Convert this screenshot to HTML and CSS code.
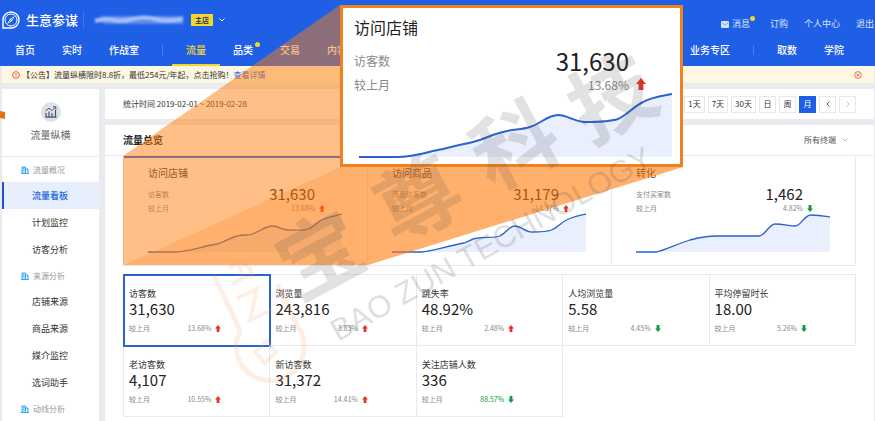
FILE: index.html
```html
<!DOCTYPE html>
<html lang="zh-CN">
<head>
<meta charset="utf-8">
<title>生意参谋 - 流量看板</title>
<link rel="stylesheet" href="styles.css">
</head>
<body>
<svg class="defs" width="0" height="0" aria-hidden="true">
  <symbol id="up" viewBox="0 0 10 12"><path d="M5 0L10 6H7.4V12H2.6V6H0Z" fill="#e83228"/></symbol>
  <symbol id="down" viewBox="0 0 10 12"><path d="M5 12L10 6H7.4V0H2.6V6H0Z" fill="#0a9c48"/></symbol>
  <symbol id="building" viewBox="0 0 8 8"><path d="M0 7.5H8M1 7V1H4.5V7M5 3H7V7M2.2 2.8H3.3M2.2 4.6H3.3" fill="#b9e2fb" stroke="#3aa5ee" stroke-width="1"/></symbol>
</svg>

<header class="header">
  <div class="topbar">
    <svg class="logo" viewBox="0 0 18 18"><path d="M1 17V9A8 8 0 1 1 9 17Z" fill="#1f5fe6" stroke="#fff" stroke-width="1.4"/><circle cx="9" cy="9" r="6" fill="none" stroke="#fff" stroke-width="1"/><path d="M12.8 5L10 10L5 13L8 8Z" fill="#fff"/><path d="M7 11L11 7" stroke="#1f5fe6" stroke-width=".8"/></svg>
    <strong class="brand">生意参谋</strong>
    <svg class="shop-name" viewBox="0 0 92 14"><path d="M3 7L9 3H90V11H12Z" fill="#5f8def"/><path d="M2 8Q12 5 20 7T40 6T62 6T90 6" fill="none" stroke="#a9c2f7" stroke-width="4"/></svg>
    <span class="shop-tag">主店</span>
    <svg class="caret" viewBox="0 0 6 4"><path d="M.5 .5L3 3L5.5 .5" fill="none" stroke="#fff"/></svg>
    <nav class="account">
      <a href="#" class="mail"><svg viewBox="0 0 8 7"><rect width="8" height="7" rx="1" fill="#d5e1fb"/><path d="M1 2L4 4L7 2" fill="none" stroke="#6b94ee" stroke-width=".7"/></svg>消息<i class="dot"></i></a>
      <a href="#">订购</a><a href="#">个人中心</a><a href="#">退出</a>
    </nav>
  </div>
  <nav class="mainnav">
    <a href="#">首页</a><a href="#">实时</a><a href="#">作战室</a>
    <i class="bar"></i>
    <a href="#" class="active">流量</a><a href="#">品类<i class="dot"></i></a><a href="#">交易</a><a href="#">内容</a>
    <a href="#" class="push">业务专区</a>
    <i class="bar"></i>
    <a href="#">取数</a><a href="#">学院</a>
  </nav>
</header>

<div class="notice">
  <svg class="ring" viewBox="0 0 8 8"><circle cx="4" cy="4" r="3.4" fill="none" stroke="#e8503c" stroke-width=".9"/><path d="M4 1.8V4.6M4 5.3V6.2" stroke="#e8503c"/></svg>
  <span>【公告】流量纵横限时8.8折，最低254元/年起，点击抢购！</span>
  <a href="#">查看详情</a>
  <button class="close" aria-label="关闭"><svg class="ring" viewBox="0 0 8 8"><circle cx="4" cy="4" r="3.4" fill="none" stroke="#e8503c" stroke-width=".8"/><path d="M2.5 2.5L5.5 5.5M5.5 2.5L2.5 5.5" stroke="#e8503c" stroke-width=".8"/></svg></button>
</div>

<div class="layout">
  <aside class="sidebar">
    <div class="module">
      <svg viewBox="0 0 20 20"><circle cx="10" cy="10" r="10" fill="#dfe1e8"/><path d="M5 15V11M8 15V9.5M11 15V11M14.5 15V8M4.5 15.2H15.5" stroke="#46506a" stroke-width="1.2" fill="none"/><path d="M4.5 9L8 6.2L11 8.5L14.5 5M12 4.8H14.8V7.5" stroke="#46506a" fill="none"/></svg>
      <span>流量纵横</span>
    </div>
    <h3><svg><use href="#building"/></svg>流量概况</h3>
    <a href="#" class="active">流量看板</a>
    <a href="#">计划监控</a>
    <a href="#">访客分析</a>
    <h3><svg><use href="#building"/></svg>来源分析</h3>
    <a href="#">店铺来源</a>
    <a href="#">商品来源</a>
    <a href="#">媒介监控</a>
    <a href="#">选词助手</a>
    <h3><svg><use href="#building"/></svg>动线分析</h3>
  </aside>

  <main class="main">
    <div class="filter">
      <span class="period">统计时间 2019-02-01 ~ 2019-02-28</span>
      <button>1天</button><button>7天</button><button>30天</button><button>日</button><button>周</button><button class="on">月</button>
      <button aria-label="上一月"><svg viewBox="0 0 4 6"><path d="M3.5 .5L1 3L3.5 5.5" fill="none" stroke="#444" stroke-width=".9"/></svg></button>
      <button aria-label="下一月"><svg viewBox="0 0 4 6"><path d="M.5 .5L3 3L.5 5.5" fill="none" stroke="#bbb" stroke-width=".9"/></svg></button>
    </div>

    <section class="panel">
      <div class="panel-head">
        <h2>流量总览</h2>
        <label class="terminal"><select aria-label="终端"><option>所有终端</option></select><svg viewBox="0 0 6 4"><path d="M.5 .5L3 3L5.5 .5" fill="none" stroke="#999" stroke-width=".7"/></svg></label>
      </div>

      <div class="cards">
        <article class="card on">
          <h4>访问店铺</h4>
          <p class="value"><span>访客数</span><b>31,630</b></p>
          <p class="cmp"><span>较上月</span><em>13.68%</em><svg><use href="#up"/></svg></p>
          <svg class="chart" viewBox="0 2 192 39" preserveAspectRatio="none"><path class="area" d="M0 40H25C40 40 50 35 68 32C76 30 82 25 88 24C95 22 98 24 103 22C112 18 117 14 122 14C129 14 132 18 138 18C147 18 152 19 158 17C165 14 167 9 173 7C180 4 185 4 191 2V40Z"/><path class="line" d="M0 40H25C40 40 50 35 68 32C76 30 82 25 88 24C95 22 98 24 103 22C112 18 117 14 122 14C129 14 132 18 138 18C147 18 152 19 158 17C165 14 167 9 173 7C180 4 185 4 191 2"/></svg>
        </article>
        <article class="card">
          <h4>访问商品</h4>
          <p class="value"><span>商品访客数</span><b>31,179</b></p>
          <p class="cmp"><span>较上月</span><em>14.37%</em><svg><use href="#up"/></svg></p>
          <svg class="chart" viewBox="0 2 192 39" preserveAspectRatio="none"><path class="area" d="M0 40H29C38 40 54 34 71 31C76 29 80 26 85 26C94 25 102 26 106 24C113 21 115 14 121 14C127 14 131 20 138 20C146 20 152 20 157 18C164 15 168 9 174 7C180 4 186 3 191 2V40Z"/><path class="line" d="M0 40H29C38 40 54 34 71 31C76 29 80 26 85 26C94 25 102 26 106 24C113 21 115 14 121 14C127 14 131 20 138 20C146 20 152 20 157 18C164 15 168 9 174 7C180 4 186 3 191 2"/></svg>
        </article>
        <article class="card">
          <h4>转化</h4>
          <p class="value"><span>支付买家数</span><b>1,462</b></p>
          <p class="cmp"><span>较上月</span><em>4.82%</em><svg><use href="#down"/></svg></p>
          <svg class="chart" viewBox="0 2 192 39" preserveAspectRatio="none"><path class="area" d="M0 40H20C26 39 43 31 53 28C64 25 70 24 80 24H121C127 24 131 12 137 12C145 12 151 14 157 14C162 14 166 3 172 3C180 3 185 4 191 5V40Z"/><path class="line" d="M0 40H20C26 39 43 31 53 28C64 25 70 24 80 24H121C127 24 131 12 137 12C145 12 151 14 157 14C162 14 166 3 172 3C180 3 185 4 191 5"/></svg>
        </article>
      </div>

      <div class="metrics">
        <article class="metric on"><h5>访客数</h5><b>31,630</b><p class="cmp"><span>较上月</span><em>13.68%</em><svg><use href="#up"/></svg></p></article>
        <article class="metric"><h5>浏览量</h5><b>243,816</b><p class="cmp"><span>较上月</span><em>3.83%</em><svg><use href="#up"/></svg></p></article>
        <article class="metric"><h5>跳失率</h5><b>48.92%</b><p class="cmp"><span>较上月</span><em>2.48%</em><svg><use href="#up"/></svg></p></article>
        <article class="metric"><h5>人均浏览量</h5><b>5.58</b><p class="cmp"><span>较上月</span><em>4.45%</em><svg><use href="#down"/></svg></p></article>
        <article class="metric"><h5>平均停留时长</h5><b>18.00</b><p class="cmp"><span>较上月</span><em>5.26%</em><svg><use href="#down"/></svg></p></article>
        <article class="metric"><h5>老访客数</h5><b>4,107</b><p class="cmp"><span>较上月</span><em>10.55%</em><svg><use href="#up"/></svg></p></article>
        <article class="metric"><h5>新访客数</h5><b>31,372</b><p class="cmp"><span>较上月</span><em>14.41%</em><svg><use href="#up"/></svg></p></article>
        <article class="metric"><h5>关注店铺人数</h5><b>336</b><p class="cmp"><span>较上月</span><em class="good">88.57%</em><svg><use href="#down"/></svg></p></article>
      </div>
    </section>
  </main>
</div>

<svg class="overlay" viewBox="0 0 875 421" aria-hidden="true">
  <path d="M123 156L340 5V167L123 265Z" fill="#ff7c0a" fill-opacity=".49"/>
  <path d="M123 265L340 167V166H683V167L368 265Z" fill="#ff7b0a" fill-opacity=".6"/>
  <path d="M0 111L5 112V119L0 118Z" fill="#e8740e"/>
</svg>

<section class="popup">
  <h4>访问店铺</h4>
  <p class="value"><span>访客数</span><b>31,630</b></p>
  <p class="cmp"><span>较上月</span><em>13.68%</em><svg><use href="#up"/></svg></p>
  <svg class="chart" viewBox="0 0 313 65"><path class="area" d="M0 64H38C58 64 70 58 84 56C99 52 106 51 114 49C126 46 134 41 144 39C154 36 162 37 171 34C181 31 189 22 199 22C208 22 216 29 226 29C240 29 250 29 259 26C268 22 274 14 284 9C293 4 304 3 313 1V64Z"/><path class="line" d="M0 64H38C58 64 70 58 84 56C99 52 106 51 114 49C126 46 134 41 144 39C154 36 162 37 171 34C181 31 189 22 199 22C208 22 216 29 226 29C240 29 250 29 259 26C268 22 274 14 284 9C293 4 304 3 313 1"/></svg>
</section>

<svg class="overlay" viewBox="0 0 875 421" aria-hidden="true">
  <g class="mark-cn">
    <text transform="translate(320 255) rotate(-28)" dy="31">宝</text>
    <text transform="translate(418 199) rotate(-28)" dy="31">尊</text>
    <text transform="translate(515 145) rotate(-28)" dy="31">科</text>
    <text transform="translate(612 98) rotate(-28)" dy="31">技</text>
  </g>
  <text class="mark-en" transform="translate(338 342) rotate(-29.3)">BAO ZUN TECHNOLOGY</text>
  <g fill="none" stroke="#f79a5c" stroke-opacity=".16" stroke-width="5">
    <path d="M214 275L240 331A34 34 0 1 0 298 327L277 284"/>
    <path d="M229 268L238 263L243 278L232 284M238 263L249 266L252 276L243 278M237 298L257 289L250 320L272 310" stroke-width="4"/>
    <path d="M255 352L267 341L276 352L265 363Z" stroke-width="4"/>
  </g>
</svg>
</body>
</html>
```
FILE: styles.css
```css
* { box-sizing: border-box; }
body {
  margin: 0;
  position: relative;
  height: 100vh;
  overflow: hidden;
  display: flex;
  flex-direction: column;
  background: #eaebef;
  color: #333;
  font: 8px/12px "Noto Sans CJK SC", sans-serif;
}
h2, h3, h4, h5, p { margin: 0; font-weight: 400; }
a { color: inherit; text-decoration: none; }
b, em { font-weight: 400; font-style: normal; }
button { margin: 0; padding: 0; border: 0; background: none; font: inherit; color: inherit; }
svg { display: block; flex: none; }
.defs { position: absolute; }

.header { background: #1f5fe6; color: #fff; flex: none; }
.topbar { display: flex; align-items: center; height: 34px; padding: 6px 1px 0 2px; }
.logo { width: 18px; height: 18px; }
.brand { margin-left: 6px; padding-right: 5px; font-size: 13px; line-height: 16px; font-weight: 500; border-right: 1px solid #3f76ea; }
.shop-name { width: 92px; height: 14px; margin-left: 9px; filter: blur(1px); }
.shop-tag { margin-left: 6px; padding: 0 4px; background: #f4d62c; color: #24386e; font-size: 7px; font-weight: 700; }
.caret { width: 6px; height: 4px; margin-left: 6px; }
.account { display: flex; gap: 16px; margin-left: auto; padding-top: 8px; color: #dbe5fc; font-size: 9px; }
.mail { position: relative; display: flex; align-items: center; gap: 3px; margin-right: 4px; }
.mail svg { width: 8px; height: 7px; }
.dot { position: absolute; top: -2px; right: -5px; width: 5px; height: 5px; border-radius: 50%; background: #f4d62c; }
.mainnav { display: flex; align-items: center; gap: 27px; height: 32px; padding: 0 31px 0 15px; font-size: 10px; font-weight: 500; }
.mainnav a { position: relative; height: 32px; line-height: 32px; flex: none; }
.mainnav .dot { top: 8px; right: -7px; }
.bar { width: 1px; height: 10px; margin: 0 -4px; background: #4d80ec; }
.mainnav .active { margin: 0 -14px; padding: 0 14px; color: #f4d62c; border-bottom: 2px solid #f4d62c; }
.push { margin-left: auto; }

.notice { display: flex; align-items: center; height: 17px; flex: none; margin: 0 1px 0 2px; padding: 0 12px 0 10px; background: #fef7e2; }
.notice span { margin-left: 2px; }
.notice a { margin-left: 0; color: #2265e2; }
.ring { width: 8px; height: 8px; }
.close { margin-left: auto; }

.layout { display: flex; gap: 6px; flex: 1; padding: 6px 1px 0 2px; }
.sidebar { width: 97px; flex: none; background: #fff; }
.module { display: flex; flex-direction: column; align-items: center; height: 68px; padding-top: 13px; border-bottom: 1px solid #e8e9ef; color: #666; font-size: 10px; }
.module svg { width: 20px; height: 20px; }
.module span { margin-top: 7px; line-height: 12px; }
.sidebar h3 { display: flex; align-items: center; gap: 4px; height: 25px; padding-left: 19px; color: #999; font-size: 8px; }
.sidebar h3 svg { width: 8px; height: 8px; }
.sidebar a { display: block; padding-left: 30px; font-size: 9px; line-height: 27px; }
.sidebar .active { background: #e7eefc; color: #2265e2; border-left: 2px solid #1f4fcc; padding-left: 28px; font-weight: 500; }

.main { flex: 1; display: flex; flex-direction: column; gap: 6px; }
.filter { display: flex; align-items: center; gap: 3px; height: 30px; flex: none; padding: 0 18px; background: #fff; }
.period { margin-right: auto; }
.filter button { display: flex; align-items: center; justify-content: center; height: 17px; min-width: 17px; padding: 0 3px; border: 1px solid #e6e8ee; }
.filter .on { background: #1f5fe6; border-color: #1f5fe6; color: #fff; }
.filter button svg { width: 4px; height: 6px; }

.panel { flex: 1; background: #fff; }
.panel-head { display: flex; align-items: center; justify-content: space-between; height: 31px; padding: 0 26px 0 18px; border-bottom: 1px solid #eaebf0; }
.panel-head h2 { font-size: 10px; font-weight: 700; color: #222; }
.terminal { display: flex; align-items: center; gap: 6px; }
.terminal select { appearance: none; border: 0; padding: 0; background: none; font: inherit; color: #555; }
.terminal svg { width: 6px; height: 4px; }

.cards { display: grid; grid-template-columns: repeat(3, 1fr); margin: 0 18px; border-bottom: 1px solid #e8eaef; border-left: 1px solid #e8eaef; }
.card { padding: 5px 24px 12px; border-right: 1px solid #e8eaef; border-top: 2px solid transparent; }
.card.on { border-top-color: #1f5fe6; }
.card h4 { font-size: 10px; line-height: 20px; }
.value { display: flex; align-items: center; justify-content: space-between; height: 20px; padding-right: 28px; color: #888; }
.card .value { font-size: 7px; padding-top: 2px; }
.value b { color: #222; font-size: 15px; }
.cmp { display: flex; align-items: center; height: 11px; color: #888; font-size: 7px; line-height: 11px; }
.cmp em { margin-left: auto; }
.cmp svg { width: 6px; height: 7px; margin-left: 4px; }
.card .cmp { padding-right: 18px; }
.chart { width: 100%; overflow: visible; }
.card .chart { height: 39px; }
.area { fill: #e9effd; }
.line { fill: none; stroke: #2a62d0; stroke-width: 1; }
.card .line { stroke-width: 1.3; }
.popup .line { stroke-width: 2; }

.metrics { display: grid; grid-template-columns: repeat(5, 1fr); margin: 8px 18px 0; border-top: 1px solid #e8eaef; border-left: 1px solid #e8eaef; }
.metric { height: 71px; padding: 12px 48px 0 5px; border-right: 1px solid #e8eaef; border-bottom: 1px solid #e8eaef; }
.metric.on { outline: 2px solid #2a62d0; outline-offset: -1px; }
.metric h5 { font-size: 9px; line-height: 13px; }
.metric b { display: block; color: #222; font-size: 15px; line-height: 18px; }
.metric .cmp { margin-top: 5px; }
.cmp .good { color: #0a9c48; }

.overlay { position: absolute; top: 0; left: 0; width: 875px; height: 421px; pointer-events: none; }
.popup { position: absolute; top: 5px; left: 340px; width: 343px; padding: 9px 8px 6px 11px; border: 3px solid #f08020; background: #fff; }
.popup h4 { font-size: 16px; line-height: 20px; color: #222; }
.popup .value { height: 24px; margin-top: 12px; padding-right: 43px; font-size: 12px; }
.popup .value b { font-size: 24px; }
.popup .cmp { height: 22px; padding-right: 26px; font-size: 12px; }
.popup .cmp svg { width: 10px; height: 12px; margin-left: 7px; }
.popup .chart { width: 313px; height: 65px; margin: -2px 0 0 5px; }

.mark-cn { fill: #555; fill-opacity: .17; font-size: 84px; font-weight: 700; text-anchor: middle; }
.mark-en { fill: #555; fill-opacity: .2; font: 31px "Liberation Sans", sans-serif; }
```
